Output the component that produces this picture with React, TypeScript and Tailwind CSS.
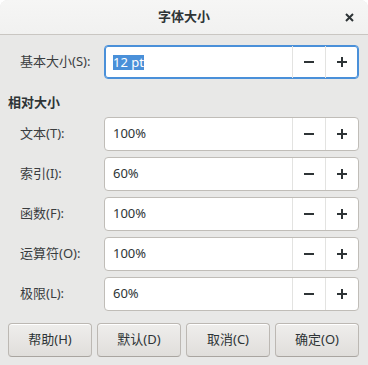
import React from "react";

const font = "font-['Noto_Sans','Noto_Sans_CJK_SC',sans-serif]";

function Minus() {
  return (
    <svg width="10" height="10" viewBox="0 0 10 10">
      <rect x="0" y="4" width="10" height="2" fill="#2e3436" />
    </svg>
  );
}
function Plus() {
  return (
    <svg width="10" height="10" viewBox="0 0 10 10">
      <rect x="0" y="4" width="10" height="2" fill="#2e3436" />
      <rect x="4" y="0" width="2" height="10" fill="#2e3436" />
    </svg>
  );
}

function Spin({ value, focused }: { value: string; focused?: boolean }) {
  return (
    <div
      className={
        "flex h-[34px] w-[255px] shrink-0 rounded-[4px] bg-white " +
        (focused
          ? "border border-[#4a90d9] shadow-[inset_0_0_0_1px_#4a90d9]"
          : "border border-[#c0bdb8]")
      }
    >
      <div className="flex flex-1 items-center pl-[8px] text-[13px] text-[#2e3436]">
        {focused ? (
          <span className="bg-[#4a90d9] text-white leading-[14px] pb-[1px]">{value}</span>
        ) : (
          <span>{value}</span>
        )}
      </div>
      <div className="flex w-[33px] items-center justify-center border-l border-[#e3e3e1]">
        <Minus />
      </div>
      <div className="flex w-[33px] items-center justify-center border-l border-[#e3e3e1]">
        <Plus />
      </div>
    </div>
  );
}

function Row({ label, value, focused }: { label: string; value: string; focused?: boolean }) {
  return (
    <div className="flex items-center">
      <div className="w-[96px] shrink-0 pl-[12px] text-[13px] text-[#3a3d3f]">{label}</div>
      <Spin value={value} focused={focused} />
    </div>
  );
}

function Btn({ children }: { children: React.ReactNode }) {
  return (
    <div className="flex h-[34px] items-center justify-center rounded-[4px] border border-[#bcb8b3] border-b-[#a9a5a0] bg-gradient-to-b from-[#efeeec] to-[#e0dedb] text-[13px] text-[#2e3436] shadow-[inset_0_1px_0_#ffffff]">
      {children}
    </div>
  );
}

export default function App() {
  return (
    <div className={"w-[368px] h-[365px] bg-white " + font}>
      <div className="flex h-full flex-col overflow-hidden rounded-t-[8px] bg-[#e8e8e7]">
        <div className="relative flex h-[35px] shrink-0 items-center justify-center border-b border-[#c9c6c2] bg-gradient-to-b from-[#f6f6f5] to-[#f1f1f0]">
          <span className="text-[13px] font-bold text-[#2e3436]">字体大小</span>
          <div className="absolute right-[14px] top-[13px]">
            <svg width="9" height="9" viewBox="0 0 9 9">
              <path d="M1 1 L8 8 M8 1 L1 8" stroke="#2e3436" strokeWidth="2" />
            </svg>
          </div>
        </div>
        <div className="flex flex-1 flex-col pl-[8px] pr-[9px] pt-[10px]">
          <Row label="基本大小(S):" value="12 pt" focused />
          <div className="mt-[14px] mb-[6px] h-[18px] text-[13px] font-bold leading-[18px] text-[#2e3436]">
            相对大小
          </div>
          <div className="flex flex-col gap-[6px]">
            <Row label="文本(T):" value="100%" />
            <Row label="索引(I):" value="60%" />
            <Row label="函数(F):" value="100%" />
            <Row label="运算符(O):" value="100%" />
            <Row label="极限(L):" value="60%" />
          </div>
          <div className="mt-[12px] grid grid-cols-4 gap-[5px]">
            <Btn>帮助(H)</Btn>
            <Btn>默认(D)</Btn>
            <Btn>取消(C)</Btn>
            <Btn>确定(O)</Btn>
          </div>
        </div>
      </div>
    </div>
  );
}
